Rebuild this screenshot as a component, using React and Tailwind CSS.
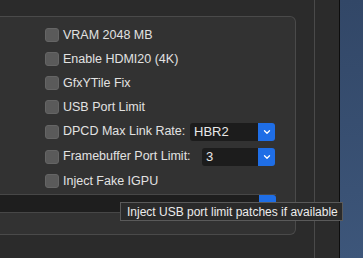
import React from "react";

const rows = [
  { label: "VRAM 2048 MB", h: "h-[24px]" },
  { label: "Enable HDMI20 (4K)", h: "h-[24px]" },
  { label: "GfxYTile Fix", h: "h-[24px]" },
  { label: "USB Port Limit", h: "h-[24px]" },
  { label: "DPCD Max Link Rate:", select: "HBR2", labelW: "w-[127px]", width: "w-[85px]", h: "h-[25px]" },
  { label: "Framebuffer Port Limit:", select: "3", labelW: "w-[139px]", width: "w-[73px]", h: "h-[25px]" },
  { label: "Inject Fake IGPU", h: "h-[24px]" },
];

function Chevron() {
  return (
    <svg width="8" height="6" viewBox="0 0 8 6" fill="none">
      <path d="M1.5 1.8 L4 4.2 L6.5 1.8" stroke="white" strokeWidth="1.3" strokeLinecap="round" strokeLinejoin="round" />
    </svg>
  );
}

function Select({ value, width }) {
  return (
    <div className={`flex h-[18px] ${width} shrink-0 overflow-hidden rounded-[3px]`}>
      <div className="flex flex-1 items-center bg-[#1c1c1c] pl-[4px] text-[13px] text-[#e8e8e8]">{value}</div>
      <div className="flex w-[17px] items-center justify-center bg-[#1f6ee6]">
        <Chevron />
      </div>
    </div>
  );
}

function Row({ row }) {
  return (
    <div className={`flex ${row.h} items-center`}>
      <div className="h-[14px] w-[14px] shrink-0 rounded-[3px] border border-[#656565] bg-[#5a5a5a]" />
      <span className={`ml-[4px] shrink-0 whitespace-nowrap text-[12.5px] text-[#e2e2e2] ${row.labelW || ""}`}>
        {row.label}
      </span>
      {row.select && <Select value={row.select} width={row.width} />}
    </div>
  );
}

export default function App() {
  return (
    <div className="relative flex h-[258px] w-[363px] overflow-hidden bg-[#2b2b2b] font-['Liberation_Sans',sans-serif]">
      <div className="w-[314px] pt-[16px]">
        <div className="h-[219px] w-[296px] rounded-br-[6px] rounded-tr-[6px] border-y border-r border-[#4a4a4a] bg-[#323232]">
          <div className="flex flex-col pl-[45px] pt-[6px]">
            {rows.map((row, i) => (
              <Row key={i} row={row} />
            ))}
          </div>
          <div className="mt-[1px] flex h-[19px] w-[276px] border-y border-[#474747]">
            <div className="flex-1 bg-[#1e1e1e]" />
            <div className="w-[17px] rounded-tr-[3px] bg-[#1f6ee6]" />
          </div>
        </div>
      </div>
      <div className="w-[1px] bg-[#4a4a4a]" />
      <div className="w-[24px] bg-[#2b2b2b]" />
      <div className="w-[1px] bg-[#0d0d0d]" />
      <div className="flex-1 bg-gradient-to-b from-[#324767] to-[#3d567a]" />
      <div className="absolute left-[120px] top-[202px] flex h-[19px] w-[223px] items-center border border-[#5a5a5a] bg-[#2a2a2a] pl-[6px] text-[12px] text-[#ececec]">
        Inject USB port limit patches if available
      </div>
    </div>
  );
}
